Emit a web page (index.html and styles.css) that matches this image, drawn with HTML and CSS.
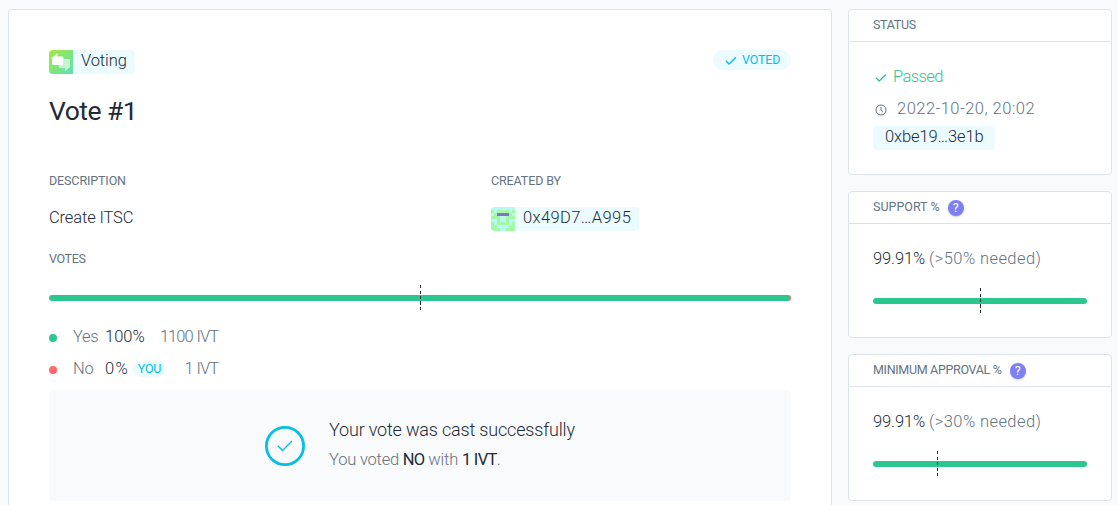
FILE: index.html
```html
<!DOCTYPE html>
<html lang="en">
<head>
<meta charset="utf-8">
<title>Vote #1</title>
<link rel="stylesheet" href="styles.css">
</head>
<body>
<div class="layout">
  <main class="card primary">
    <div class="topline">
      <span class="badge app-badge">
        <svg class="badge-icon" width="24" height="24" viewBox="0 0 24 24">
          <defs><linearGradient id="app" x1="0" y1="0" x2="1" y2="1"><stop offset="0" stop-color="#a2ea38"/><stop offset="1" stop-color="#5de0bd"/></linearGradient></defs>
          <path fill="url(#app)" d="M0 0h24v24H0z"/>
          <path fill="#fff" opacity=".6" d="M14.500 9H19.500a1.500 1.500 0 0 1 1.500 1.500v6.500L16 21.300v-3.300H11a1.500 1.500 0 0 1-1.500-1.500V15h3.500a1.500 1.500 0 0 0 1.500-1.500z"/>
          <path fill="#fff" d="M3 7.500 8.500 3v3.500H13A1.500 1.500 0 0 1 14.500 8v5.500A1.500 1.500 0 0 1 13 15H4.500A1.500 1.500 0 0 1 3 13.500z"/>
        </svg>
        <span class="badge-label">Voting</span>
      </span>
      <span class="tag voted">
        <svg width="12" height="10" viewBox="0 0 12 10"><path class="stroke" d="M1.300 5.200 4 8 10.500 1.700"/></svg>
        <span>VOTED</span>
      </span>
    </div>
    <h1>Vote #1</h1>
    <div class="columns">
      <section>
        <h2>DESCRIPTION</h2>
        <p class="text">Create ITSC</p>
      </section>
      <section>
        <h2>CREATED BY</h2>
        <span class="badge address">
          <svg class="badge-icon" width="24" height="24" viewBox="0 0 8 8" shape-rendering="crispEdges">
            <path fill="#b9f8f2" d="M0 0h8v8H0z"/>
            <path fill="#a3f9a3" d="M0 1h1v1H0zM2 1h4v1H2zM7 1h1v1H7zM1 2h6v1H1zM0 3h3v1H0zM5 3h3v1H5zM2 4h1v1H2zM5 4h1v1H5zM2 5h4v1H2zM0 5h1v1H0zM7 5h1v1H7zM0 6h2v1H0zM6 6h2v1H6zM0 7h3v1H0zM5 7h3v1H5z"/>
            <path fill="#8672c5" d="M2 2h4v1H2z"/>
          </svg>
          <span class="badge-label">0x49D7…A995</span>
        </span>
      </section>
    </div>
    <h2 class="votes-title">VOTES</h2>
    <div class="bar main-bar"><i class="quorum half"></i></div>
    <ul class="legend">
      <li><i class="dot yes"></i><span class="name">Yes</span><span class="pct"><b>100%</b></span><span class="amount">1100 IVT</span></li>
      <li><i class="dot no"></i><span class="name">No</span><span class="pct"><b class="small-share">0%</b><em class="tag you">YOU</em></span><span class="amount">1 IVT</span></li>
    </ul>
    <div class="cast">
      <svg width="40" height="40" viewBox="0 0 40 40"><circle cx="20" cy="20" r="18.600" fill="none" stroke="#08bee5" stroke-width="2.800"/><path class="stroke" d="M13.300 20.300 17.500 24.500 26.500 15.500"/></svg>
      <div>
        <p class="cast-title">Your vote was cast successfully</p>
        <p class="cast-text">You voted <b>NO</b> with <b>1 IVT</b>.</p>
      </div>
    </div>
  </main>
  <aside>
    <section class="card box status">
      <header><h2>STATUS</h2></header>
      <div class="box-body">
        <p class="passed"><svg width="12" height="10" viewBox="0 0 12 10"><path class="stroke" d="M1.500 5.200 4.200 7.900 10.500 1.900"/></svg><span>Passed</span></p>
        <p class="date"><svg width="12" height="12" viewBox="0 0 12 12"><circle cx="6" cy="6" r="5"/><path d="M6 3v3.300l2 1.200"/></svg><span>2022-10-20, 20:02</span></p>
        <span class="badge hash"><span>0xbe19…3e1b</span></span>
      </div>
    </section>
    <section class="card box">
      <header><h2 class="support">SUPPORT %</h2><span class="help">?</span></header>
      <div class="box-body">
        <p class="ratio"><b>99.91%</b> <span>(&gt;50% needed)</span></p>
        <div class="bar"><i class="quorum half"></i></div>
      </div>
    </section>
    <section class="card box">
      <header><h2 class="approval">MINIMUM APPROVAL %</h2><span class="help">?</span></header>
      <div class="box-body">
        <p class="ratio"><b>99.91%</b> <span>(&gt;30% needed)</span></p>
        <div class="bar"><i class="quorum third"></i></div>
      </div>
    </section>
  </aside>
</div>
</body>
</html>
```
FILE: styles.css
```css
* { box-sizing: border-box; }
body { margin: 0; height: 505px; overflow: hidden; background: #f9fafc; color: #212b36; font: 300 16.5px/24px Roboto, "Liberation Sans", sans-serif; }
h1, h2, p, ul { margin: 0; padding: 0; }
b { font-weight: 300; }
em { font-style: normal; }
svg { display: block; flex: none; }
.stroke { fill: none; stroke: currentColor; stroke-width: 1.4; stroke-linecap: round; stroke-linejoin: round; }
.layout { display: flex; align-items: flex-start; gap: 16px; padding: 9px 6px 0 8px; }
.card { background: #fff; border: 1px solid #dde4e9; border-radius: 4px; }
.primary { width: 824px; height: 496px; padding: 40px 40px 0; border-bottom: 0; border-radius: 4px 4px 0 0; }
.topline { display: flex; justify-content: space-between; align-items: flex-start; height: 24px; }
.badge { display: inline-flex; height: 24px; background: #ebfbff; border-radius: 4px; overflow: hidden; white-space: nowrap; }
.badge-label { padding-left: 8px; line-height: 22px; }
.app-badge { width: 86px; letter-spacing: -.1px; }
.tag { display: flex; align-items: center; background: #ebfbff; color: #08bee5; font-size: 12.5px; font-weight: 400; letter-spacing: -.35px; }
.voted { width: 78px; height: 20px; padding-left: 12px; gap: 5px; border-radius: 10px; letter-spacing: -.15px; }
.voted svg { margin-top: 2px; }
h1 { margin-top: 20px; font-size: 26.5px; line-height: 34px; font-weight: 400; letter-spacing: -.55px; white-space: nowrap; }
h2 { font-size: 12.5px; line-height: 18px; font-weight: 400; letter-spacing: -.12px; color: #637381; white-space: nowrap; }
.columns { display: grid; grid-template-columns: 442px 1fr; margin-top: 44px; height: 78px; }
.text { margin-top: 16px; letter-spacing: -.13px; }
.address { width: 148px; margin-top: 17px; letter-spacing: .4px; }
.votes-title { letter-spacing: -.35px; }
.bar { position: relative; height: 6px; border-radius: 3px; background: #2cc68f; }
.main-bar { margin-top: 27px; background: linear-gradient(90deg, #2cc68f 99.91%, #ff6969 99.91%); }
.quorum { position: absolute; top: -10px; width: 1px; height: 26px; background: repeating-linear-gradient(#212b36 0 3px, transparent 3px 5.5px); }
.half { left: 50%; }
.third { left: 30%; }
.legend { list-style: none; margin-top: 24px; }
.legend li { display: flex; height: 24px; margin-bottom: 8px; align-items: flex-start; }
.dot { width: 8px; height: 8px; margin: 9px 16px 0 0; border-radius: 50%; }
.yes { background: #2cc68f; }
.no { background: #ff6969; }
.name { width: 32px; color: #637381; letter-spacing: -.3px; white-space: nowrap; }
.pct { display: flex; width: 66px; }
.small-share { width: 24px; letter-spacing: 1.4px; }
.amount { width: 47px; color: #637381; display: flex; justify-content: flex-end; letter-spacing: -1px; word-spacing: 1px; white-space: nowrap; }
.you { width: 33px; height: 16px; margin: 4px 0 0 4px; justify-content: center; border-radius: 8px; letter-spacing: -.2px; }
.cast { display: flex; align-items: center; justify-content: flex-start; height: 111px; margin-top: 9px; padding-left: 216px; gap: 24px; border-radius: 4px; background: #f9fafc; color: #08bee5; }
.cast p { white-space: nowrap; }
.cast-title { margin-top: -2px; color: #212b36; font-size: 18px; line-height: 30px; letter-spacing: -.18px; }
.cast-text { color: #637381; line-height: 30px; letter-spacing: -.2px; }
.cast-text b { color: #212b36; font-weight: 400; letter-spacing: -.7px; }
aside { width: 264px; display: grid; gap: 16px; }
.box { height: 147px; }
.status { height: 166px; }
.box header { display: flex; align-items: center; height: 32px; padding: 0 24px; gap: 8px; border-bottom: 1px solid #dde4e9; }
.box h2 { margin-top: -2px; letter-spacing: -.32px; }
.box .support { letter-spacing: 0; }
.help { display: flex; align-items: center; justify-content: center; width: 16px; height: 16px; margin-top: 1px; border-radius: 50%; background: #7c80f2; color: #fff; font-size: 12.5px; font-weight: 400; box-shadow: 0 1px 2px #0003; }
.box-body { padding: 23px 24px 0; }
.passed, .date { display: flex; align-items: center; height: 24px; white-space: nowrap; }
.passed { color: #2cc68f; padding-left: 2px; gap: 6px; letter-spacing: -.6px; }
.passed svg { margin-top: 2px; }
.date { margin-top: 8px; padding-left: 2px; gap: 10px; color: #637381; letter-spacing: .48px; }
.date svg { margin-top: 2px; fill: none; stroke: currentColor; }
.hash { width: 122px; margin-top: 5px; padding-left: 12px; line-height: 22px; letter-spacing: -.1px; }
.ratio { white-space: nowrap; }
.ratio b { letter-spacing: -.12px; }
.ratio span { color: #637381; letter-spacing: .42px; }
.box-body .bar { margin-top: 27px; }
```
